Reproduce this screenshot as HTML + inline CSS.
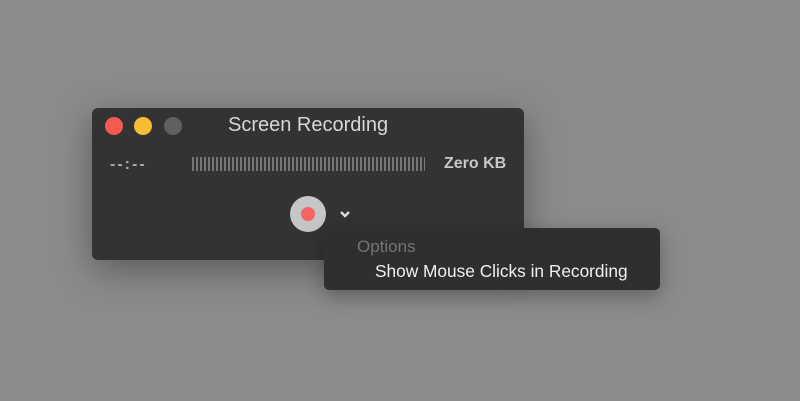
<!DOCTYPE html>
<html><head><style>
body{margin:0;width:800px;height:401px;background:#8b8b8b;position:relative;overflow:hidden;font-family:"Liberation Sans",sans-serif}
.win{position:absolute;left:92px;top:108px;width:432px;height:152px;background:#333;border-radius:6px;box-shadow:0 10px 35px rgba(0,0,0,.35)}
.dot{position:absolute;top:117px;width:18px;height:18px;border-radius:50%}
.t{position:absolute;white-space:nowrap}
.bars{position:absolute;left:192px;top:157px;width:233px;height:14px;background:repeating-linear-gradient(90deg,#777 0 2px,transparent 2px 4px)}
.menu{position:absolute;left:324px;top:228px;width:336px;height:62px;background:#2f2f2f;border-radius:5px;box-shadow:0 6px 20px rgba(0,0,0,.3)}
</style></head><body>
<div class="win"></div>
<div class="dot" style="left:105px;background:#f45a52"></div>
<div class="dot" style="left:134px;background:#f6bd34"></div>
<div class="dot" style="left:164px;background:#606060"></div>
<div class="t" style="left:228px;top:114px;font-size:20px;color:#d8d8d8">Screen Recording</div>
<div class="t" style="left:110px;top:156px;font-size:16px;color:#aaa;letter-spacing:2px;font-weight:bold">--:--</div>
<div class="bars"></div>
<div class="t" style="left:444px;top:155px;font-size:16px;font-weight:bold;color:#c8c8c8">Zero KB</div>
<div style="position:absolute;left:290px;top:196px;width:36px;height:36px;border-radius:50%;background:#c6c6c6"></div>
<div style="position:absolute;left:301px;top:207px;width:14px;height:14px;border-radius:50%;background:#f56565"></div>
<svg style="position:absolute;left:339px;top:209px" width="12" height="10"><path d="M2 3 L6 7 L10 3" stroke="#ddd" stroke-width="2.4" fill="none"/></svg>
<div class="menu"></div>
<div class="t" style="left:357px;top:237px;font-size:17px;color:#747474">Options</div>
<div class="t" style="left:375px;top:261px;font-size:17.3px;color:#f0f0f0">Show Mouse Clicks in Recording</div>
</body></html>
